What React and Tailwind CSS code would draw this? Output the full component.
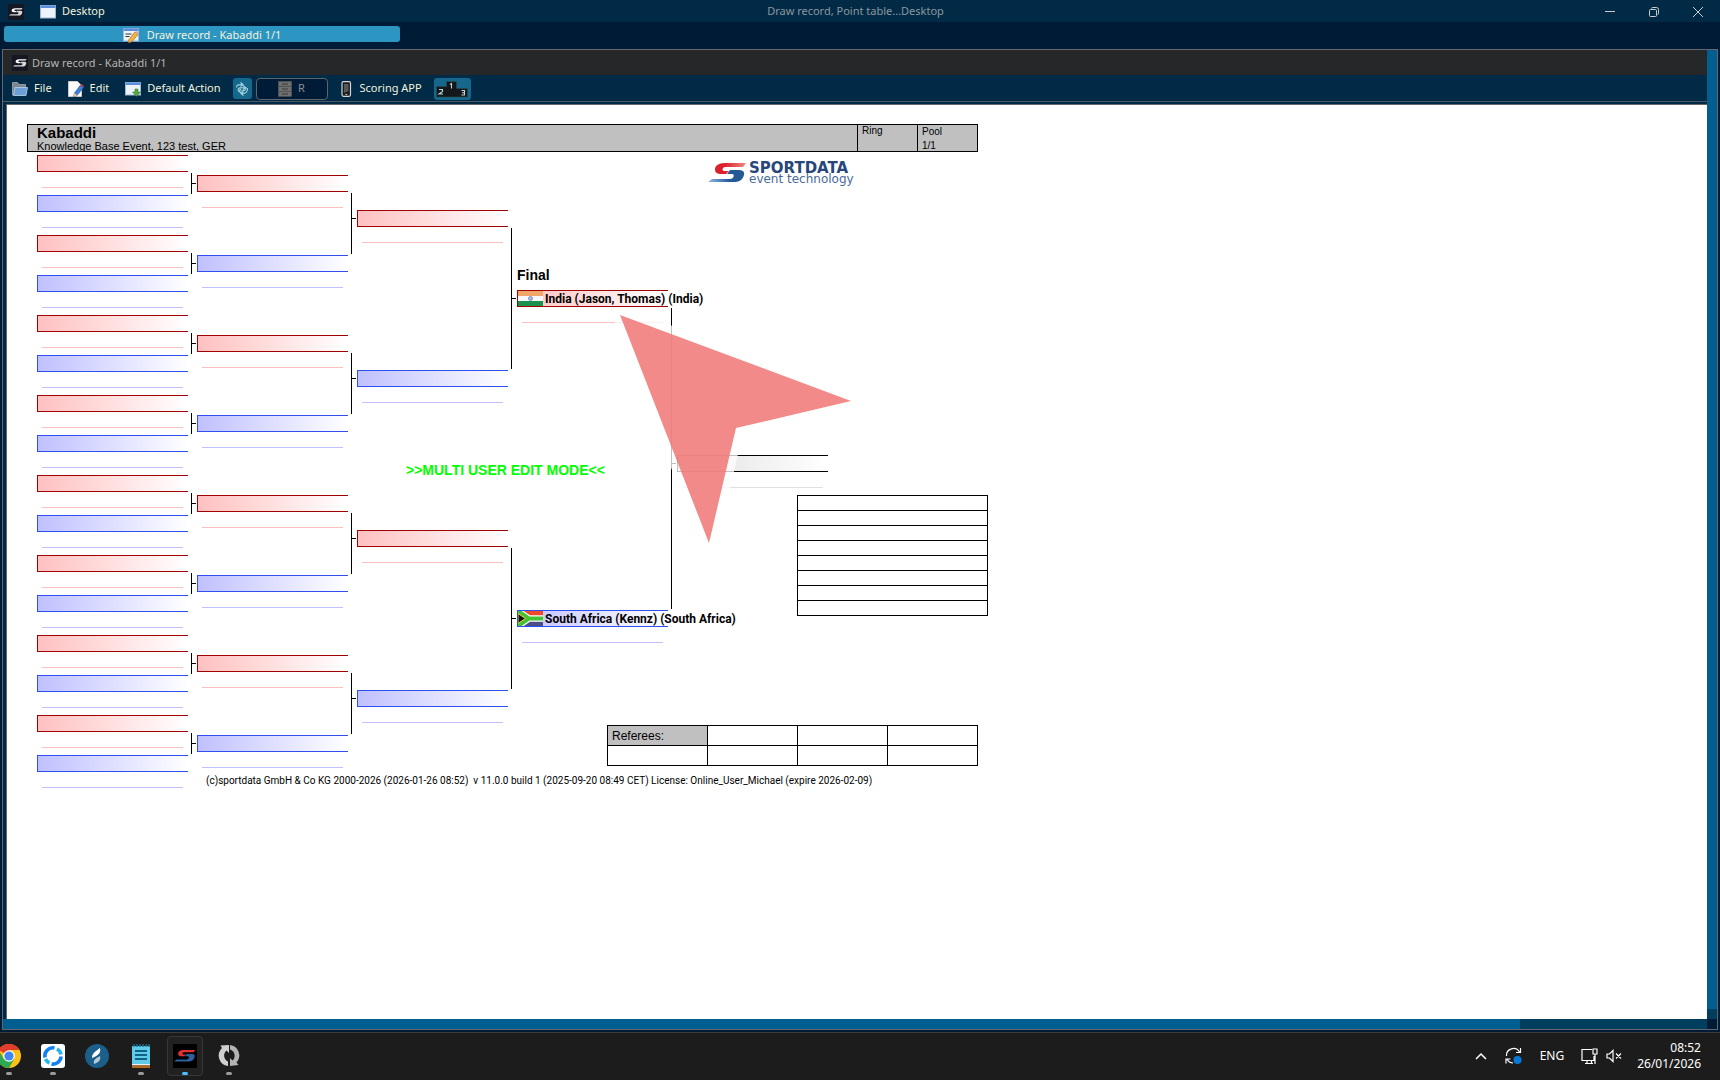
import React from "react";

const UI = "font-['Noto_Sans',sans-serif]";

function SMark({ className, top = "#ffffff", bottom = "#ffffff" }) {
  return (
    <svg viewBox="0 0 38 21" className={className} aria-hidden="true">
      <path d="M37 0H17C10 0 7 3 7 6.500C7 10 10 11 13 11H18L21 8H16C14 8 14 4 17 4H34z" fill={top} />
      <path d="M22 7H31C37 7 37 11 35 14.500C33 19 30 20 26 20H0L4 16.500H22C26 16.500 27 11 24 11H19z" fill={bottom} />
    </svg>
  );
}

function AppMark() {
  return (
    <span className="flex size-4 items-center justify-center bg-[#151722]">
      <SMark className="h-2 w-3.5" top="#ffffff" bottom="#d8d8d8" />
    </span>
  );
}

function WindowIcon({ children }) {
  return (
    <svg viewBox="0 0 16 16" className="size-4" aria-hidden="true">
      <rect x="0.5" y="1.5" width="15" height="12.500" fill="#eef3fa" stroke="#9db8dc" />
      <rect x="0.500" y="1.500" width="15" height="2.500" fill="#5b8fdc" />
      {children}
    </svg>
  );
}

const Pencil = () => (
  <g>
    <path d="M6 12.500 12 5l3 2.500L9 14.600 5.400 16z" fill="#f3b73c" stroke="#a8641c" strokeWidth="0.700" />
    <path d="M12 5l1.200-1.200L16 6l-1 1.500z" fill="#e8a0a0" />
  </g>
);

function FolderIcon() {
  return (
    <svg viewBox="0 0 16 16" className="size-4" aria-hidden="true">
      <path d="M0.500 14V1.500h5l1.500 2h6.500V14z" fill="#7d868e" stroke="#a5abb0" strokeWidth="0.8" />
      <path d="M3 6.500h12.500L14 14.500H1.500z" fill="#6d9fd6" stroke="#b4d0ee" strokeWidth="0.8" />
    </svg>
  );
}

function EditIcon() {
  return (
    <svg viewBox="0 0 16 16" className="size-4" aria-hidden="true">
      <path d="M0.500 0.500h9l4 4v11h-13z" fill="#fafafa" stroke="#c9c9c9" />
      <path d="M6.500 12 12.500 4l3 2.500-6.500 8-3.500 1.500z" fill="#3f7fd8" stroke="#1d4f9c" strokeWidth="0.600" />
      <path d="M12.500 4l1-1.200L16 5l-.5 1.500z" fill="#d8322a" />
      <path d="M6.500 12l2.500 2.500L5.500 16z" fill="#f3c98a" />
    </svg>
  );
}

function PhoneIcon() {
  return (
    <svg viewBox="0 0 16 16" className="size-4" aria-hidden="true">
      <rect x="4" y="0.700" width="8.500" height="14.600" rx="1.500" fill="#1b1b1b" stroke="#d6d6d6" strokeWidth="1.200" />
      <path d="M6 3h4.500v7L6 12z" fill="#55595d" />
      <rect x="7.300" y="13" width="2" height="1" fill="#bbb" />
    </svg>
  );
}

function ServerIcon() {
  return (
    <svg viewBox="0 0 14 16" className="h-4 w-3.5" aria-hidden="true">
      <g fill="#707070" stroke="#5a5a5a" strokeWidth="0.600">
        <rect x="0.500" y="0.500" width="13" height="4.600" />
        <rect x="0.500" y="5.600" width="13" height="4.600" />
        <rect x="0.500" y="10.700" width="13" height="4.600" />
      </g>
      <path d="M4 3h6M4 8h6M4 13h6" stroke="#3b3b3b" />
    </svg>
  );
}

function LinkIcon() {
  return (
    <svg viewBox="0 0 14 14" className="size-3.5" fill="none" stroke="#a9d6e2" strokeWidth="1.100" aria-hidden="true">
      <path d="M1.500 5.500C1.500 2.500 4 2.500 7.500 2.500M5.500 0.500l2.500 2-2.500 2M3 8.500C3 5.500 5 5.500 9.500 5.500M8 3.500l2.500 2-2.500 2" />
      <path d="M12.500 6c0 5-2 5.500-6 5.500M8.500 9.500l-2.500 2 2.500 2M11 5c0 3.500-1 4-5.500 4M6 7l-2.500 2L6 11" />
    </svg>
  );
}

function PodiumIcon() {
  return (
    <svg viewBox="0 0 32 18" className="h-[18px] w-8" aria-hidden="true">
      <path d="M0.500 6.500H10.500V1.500H20.500V8.500H31.500V17H0.500z" fill="#14181a" stroke="#2a4a52" strokeWidth="0.600" />
      <g fill="none" stroke="#b9d3dc" strokeWidth="1.100">
        <path d="M3 9.500h3.500v2L3 14h4" />
        <path d="M14 4.500l1.500-1V8.500" />
        <path d="M25.500 10.500h3v4.500h-3M26 12.700h2.500" />
      </g>
    </svg>
  );
}

const TONES = {
  red: ["border-[#a00000] from-[#ffc0c0]", "bg-[#ffc0c0]"],
  blue: ["border-[#2f4ff0] from-[#c0c0ff]", "bg-[#c0c0ff]"],
  black: ["border-black from-[#e0e0e0]", "bg-[#e0e0e0]"],
};

function Slot({ tone, children }) {
  const [box, line] = TONES[tone];
  return (
    <div>
      <div className={`flex h-[17px] items-center border-y border-l bg-linear-to-r to-white ${box}`}>{children}</div>
      <div className={`mx-[5px] mt-[15px] h-px ${line}`} />
    </div>
  );
}

function Round({ count, pitch, offset }) {
  return (
    <div className={`w-[151px] shrink-0 ${offset}`}>
      {Array.from({ length: count }, (_, i) => (
        <div key={i} className={pitch}>
          <Slot tone={i % 2 ? "blue" : "red"} />
        </div>
      ))}
    </div>
  );
}

function Joins({ count, pitch, offset, height, tick }) {
  return (
    <div className={`w-[9px] shrink-0 ${offset}`}>
      {Array.from({ length: count }, (_, i) => (
        <div key={i} className={pitch}>
          <div className={`ml-[3px] mr-px border-l border-black ${height} ${tick}`}>
            <div className="h-px bg-black" />
          </div>
        </div>
      ))}
    </div>
  );
}

function IndiaFlag() {
  return (
    <svg viewBox="0 0 25 15" className="h-[15px] w-[25px] shrink-0" role="img" aria-label="India">
      <rect width="25" height="5" fill="#f2a66a" />
      <rect y="5" width="25" height="5" fill="#f7f7f7" />
      <rect y="10" width="25" height="5" fill="#1b9150" />
      <circle cx="12.500" cy="7.500" r="2" fill="#a9b8dc" stroke="#6f87c0" strokeWidth="0.800" />
    </svg>
  );
}

function SouthAfricaFlag() {
  return (
    <svg viewBox="0 0 25 15" className="h-[15px] w-[25px] shrink-0" role="img" aria-label="South Africa">
      <rect width="25" height="7.500" fill="#ee4a2c" />
      <rect y="7.500" width="25" height="7.500" fill="#4b4f86" />
      <path d="M0 0 11 7.500 0 15M11 7.500h14" fill="none" stroke="#fff" strokeWidth="6.500" />
      <path d="M0 0 11 7.500 0 15M11 7.500h14" fill="none" stroke="#45c234" strokeWidth="4" />
      <path d="M0 2.500 7.500 7.500 0 12.500z" fill="#111" stroke="#e8d030" strokeWidth="1" />
    </svg>
  );
}

function Competitor({ children }) {
  return <span className="ml-0.5 font-['Roboto',sans-serif] text-[12px] font-bold whitespace-nowrap">{children}</span>;
}

function Bracket() {
  return (
    <div className="col-start-1 row-start-1 ml-[30px] mt-[3px] flex">
      <Round count={16} pitch="h-10" offset="pt-0" />
      <Joins count={8} pitch="h-20" offset="pt-[18px]" height="h-[21px]" tick="pt-2.5" />
      <Round count={8} pitch="h-20" offset="pt-5" />
      <Joins count={4} pitch="h-40" offset="pt-[38px]" height="h-[61px]" tick="pt-[25px]" />
      <Round count={4} pitch="h-40" offset="pt-[55px]" />
      <Joins count={2} pitch="h-80" offset="pt-[73px]" height="h-[141px]" tick="pt-[70px]" />
      <div className="w-[151px] shrink-0">
        <h2 className="flex h-[135px] items-end pb-1.5 text-[14px] leading-[18px] font-bold">Final</h2>
        <div className="h-80">
          <Slot tone="red">
            <IndiaFlag />
            <Competitor>India (Jason, Thomas) (India)</Competitor>
          </Slot>
        </div>
        <Slot tone="blue">
          <SouthAfricaFlag />
          <Competitor>South Africa (Kennz) (South Africa)</Competitor>
        </Slot>
      </div>
      <Joins count={1} pitch="h-80" offset="pt-[153px]" height="h-[301px]" tick="pt-[155px]" />
      <div className="w-[151px] shrink-0 pt-[300px]">
        <Slot tone="black" />
      </div>
    </div>
  );
}

function SportdataLogo() {
  return (
    <svg viewBox="0 0 160 26" className="h-[26px] w-40 overflow-visible" role="img" aria-label="Sportdata event technology">
      <defs>
        <linearGradient id="logoRed"><stop offset="0.300" stopColor="#dc1f2b" /><stop offset="1" stopColor="#f08a80" /></linearGradient>
        <linearGradient id="logoBlue"><stop offset="0" stopColor="#8fb8e4" /><stop offset="0.600" stopColor="#235a96" /></linearGradient>
      </defs>
      <path d="M38 3H17C10 3 7 6 7 9.500C7 13 10 14 13 14H18L21 11H16C14 11 14 7 17 7H35z" fill="url(#logoRed)" />
      <path d="M22 10H31C37 10 37 14 35 17.500C33 21 30 22 26 22H0L4 19H22C26 19 27 14 24 14H19z" fill="url(#logoBlue)" />
      <text x="41" y="13" fontFamily="DejaVu Sans" fontSize="15" fontWeight="700" fill="#27467a">SPORTDATA</text>
      <text x="41" y="23" fontFamily="DejaVu Sans" fontSize="12" fill="#4a6a9c">event technology</text>
    </svg>
  );
}

function Tables() {
  return (
    <div className="col-start-1 row-start-1 flex w-[981px] flex-col pt-2">
      <div className="ml-[701px]"><SportdataLogo /></div>
      <table className="mt-[309px] w-[191px] table-fixed self-end border-collapse" aria-label="Results">
        <tbody>
          {Array.from({ length: 8 }, (_, i) => (
            <tr key={i}><td className="h-[15px] border border-black p-0" /></tr>
          ))}
        </tbody>
      </table>
      <table className="mt-[109px] mr-2.5 w-[371px] table-fixed self-end border-collapse text-[12px] leading-4">
        <colgroup><col className="w-[100px]" /><col /><col /><col /></colgroup>
        <tbody>
          <tr>
            <th scope="row" className="h-5 border border-black bg-[#c0c0c0] p-0 pl-1 text-left font-normal">Referees:</th>
            <td className="border border-black p-0" /><td className="border border-black p-0" /><td className="border border-black p-0" />
          </tr>
          <tr>
            <td className="h-5 border border-black p-0" /><td className="border border-black p-0" />
            <td className="border border-black p-0" /><td className="border border-black p-0" />
          </tr>
        </tbody>
      </table>
      <p className="mt-[7px] ml-[199px] font-['Roboto',sans-serif] text-[10px] leading-4 whitespace-pre">
        {"(c)sportdata GmbH & Co KG 2000-2026 (2026-01-26 08:52)  v 11.0.0 build 1 (2025-09-20 08:49 CET) License: Online_User_Michael (expire 2026-02-09)"}
      </p>
    </div>
  );
}

function Sheet() {
  return (
    <main className="relative min-h-0 flex-1 overflow-hidden bg-white pt-[19px] font-['Liberation_Sans',sans-serif] text-black">
      <header className="ml-5 flex h-7 w-[951px] border border-black bg-[#c0c0c0]">
        <div className="flex-1 pl-[9px]">
          <h1 className="text-[15px] leading-4 font-bold">Kabaddi</h1>
          <p className="text-[11px] leading-2.5">Knowledge Base Event, 123 test, GER</p>
        </div>
        <div className="w-[60px] border-l border-black pl-1 text-[10px] leading-3">Ring</div>
        <div className="w-[60px] border-l border-black pl-1 text-[10px] leading-3.5">Pool<br />1/1</div>
      </header>
      <div className="grid">
        <Bracket />
        <Tables />
        <p className="col-start-1 row-start-1 mt-[308px] ml-[399px] h-5 text-[14px] leading-5 font-bold whitespace-nowrap text-[#00ff00]">
          &gt;&gt;MULTI USER EDIT MODE&lt;&lt;
        </p>
      </div>
      <svg viewBox="0 0 260 250" className="absolute top-[200px] left-[603px] h-[250px] w-[260px]" aria-hidden="true">
        <path d="M10 10 241 96 126 123 99 238z" fill="#fff" stroke="#fff" strokeWidth="16" strokeLinejoin="round" opacity="0.750" />
        <path d="M10 10 241 96 126 123 99 238z" fill="#ef7573" opacity="0.850" />
      </svg>
    </main>
  );
}

function TaskItem({ label, dot = "bg-[#9a9a9a] w-1.5", active, children }) {
  return (
    <button aria-label={label} className={`flex h-10 w-9 shrink-0 flex-col items-center justify-end rounded border ${active ? "border-[#383838] bg-[#212121]" : "border-transparent"}`}>
      <span className="flex size-6 items-center justify-center">{children}</span>
      <span className={`mt-1 h-[3px] rounded-full ${dot}`} />
    </button>
  );
}

function Taskbar() {
  return (
    <footer className="flex h-12 shrink-0 items-start border-t border-[#3c3c3c] bg-[#1c1c1c] pt-[3px] pr-[19px] text-white">
      <nav className="-ml-[9px] flex gap-2" aria-label="Taskbar">
        <TaskItem label="Chrome">
          <svg viewBox="0 0 24 24" className="size-6">
            <circle cx="12" cy="12" r="12" fill="#fbc116" />
            <path d="M12 12 1.600 6A12 12 0 0 1 22.400 6H12z" fill="#e33b2e" />
            <path d="M1.600 6A12 12 0 0 0 12 24l5.200-9L12 12 6.800 15z" fill="#2da94f" />
            <circle cx="12" cy="12" r="5.800" fill="#fff" /><circle cx="12" cy="12" r="4.600" fill="#4285f4" />
          </svg>
        </TaskItem>
        <TaskItem label="Remote support">
          <svg viewBox="0 0 24 24" className="size-6">
            <rect width="24" height="24" rx="3" fill="#fff" />
            <g fill="none" strokeWidth="3.600">
              <path d="M4 13.500A8 8 0 0 1 13.500 4" stroke="#1580f2" />
              <path d="M16 5a8 8 0 0 1 4 5.500" stroke="#22b6f0" />
              <path d="M20 12.500A8 8 0 0 1 10.500 20" stroke="#1580f2" />
              <path d="M8.500 19a8 8 0 0 1-4-4" stroke="#22b6f0" />
            </g>
          </svg>
        </TaskItem>
        <TaskItem label="Feather" dot="w-1.5">
          <svg viewBox="0 0 24 24" className="size-6">
            <circle cx="12" cy="12" r="12" fill="#1c5f8a" />
            <path d="M7 14c0-5 4-7 8-10 1 5-1 7-8 10z" fill="#fff" />
            <path d="M9 20c-1-5 3-6 6-8 1 4-1 6-6 8z" fill="#b8ccd8" />
          </svg>
        </TaskItem>
        <TaskItem label="Notepad">
          <svg viewBox="0 0 24 24" className="size-6">
            <rect x="3" y="2" width="18" height="19" fill="#5fcbe6" />
            <rect x="3" y="20" width="18" height="1.500" fill="#eee" /><rect x="3" y="21.500" width="18" height="2.500" fill="#b5651d" />
            <path d="M5 0v3M8 0v3M11 0v3M14 0v3M17 0v3M20 0v3" stroke="#1d6f94" strokeWidth="1.400" />
            <path d="M6 7h12M6 11h12M6 15h12" stroke="#11618a" strokeWidth="1.800" />
          </svg>
        </TaskItem>
        <TaskItem label="Sportdata" active dot="bg-[#4cc2ff] w-1.5">
          <span className="flex size-6 items-center justify-center bg-black">
            <SMark className="h-3 w-[22px]" top="#e03030" bottom="#2e5f9e" />
          </span>
        </TaskItem>
        <TaskItem label="Sync">
          <svg viewBox="0 0 24 24" className="size-6">
            <path d="M11 22A10.500 10.500 0 0 1 5 4L3.500 1.500 12 1v8L9.500 6.500A6.500 6.500 0 0 0 11 17.500z" fill="#cfcfcf" />
            <path d="M13 1a10.500 10.500 0 0 1 6.500 17.500l2 2.500-8.500 1v-8l2.500 2.500A6.500 6.500 0 0 0 13 5.500z" fill="#b4b4b4" />
          </svg>
        </TaskItem>
      </nav>
      <div className={`ml-auto flex h-10 items-center text-[12px] ${UI}`}>
        <button aria-label="Show hidden icons">
          <svg viewBox="0 0 12 8" className="h-2 w-3" fill="none" stroke="#fff" strokeWidth="1.500"><path d="M1 7l5-5 5 5" /></svg>
        </button>
        <button aria-label="Updates" className="ml-[18px]">
          <svg viewBox="0 0 18 18" className="size-[18px]" fill="none" stroke="#fff" strokeWidth="1.200">
            <path d="M1.500 9a7 7 0 0 1 13-4M15.500 1v4.500H11M8 16a7 7 0 0 1-6-4M1 16.500V12h4.500" />
            <circle cx="12.500" cy="13" r="4" fill="#0a78d7" stroke="none" />
          </svg>
        </button>
        <button className="ml-[17px]">ENG</button>
        <button aria-label="Network and sound" className="ml-[17px] flex items-center gap-2">
          <svg viewBox="0 0 17 17" className="size-[17px]" fill="none" stroke="#fff" strokeWidth="1.200">
            <path d="M11 1.500H1v11h12V8M4 15.500h8M6 12.500v3M10.500 12.500v3M12 1h4v5h-4zM14 6v10" />
          </svg>
          <svg viewBox="0 0 17 14" className="h-3.5 w-[17px]" fill="none" stroke="#fff" strokeWidth="1.200">
            <path d="M1 5h2.500L7 1.500v11L3.500 9H1zM10 4.500l5 5M15 4.500l-5 5" />
          </svg>
        </button>
        <div className="ml-3.5 text-right leading-4">08:52<br />26/01/2026</div>
      </div>
    </footer>
  );
}

export default function App() {
  return (
    <div className={`flex h-screen flex-col overflow-hidden bg-[#001b35] text-[11px] text-[#f2f2dc] ${UI}`}>
      <header className="grid h-[22px] shrink-0 grid-cols-[1fr_auto_1fr] items-center bg-[#002a46] pt-px pr-[17px] pl-2">
        <div className="flex items-center">
          <AppMark />
          <span className="ml-4"><WindowIcon /></span>
          <span className="ml-1.5">Desktop</span>
        </div>
        <div className="text-[#8c979d]">Draw record, Point table...Desktop</div>
        <div className="flex justify-end gap-[34px] text-[#c8ccce]">
          <button aria-label="Minimise"><svg viewBox="0 0 10 10" className="size-2.5" stroke="currentColor"><path d="M0 4.500h10" /></svg></button>
          <button aria-label="Restore"><svg viewBox="0 0 10 10" className="size-2.5" fill="none" stroke="currentColor"><rect x="0.500" y="2.500" width="7" height="7" rx="1" /><path d="M2.500 1.500q0-1 1-1h4q2 0 2 2v4q0 1-1 1" /></svg></button>
          <button aria-label="Close"><svg viewBox="0 0 10 10" className="size-2.5" stroke="currentColor"><path d="M0 0l10 10M10 0L0 10" /></svg></button>
        </div>
      </header>
      <div className="flex h-[27px] shrink-0 items-start px-1 pt-1">
        <button className="flex h-4 w-[396px] items-center justify-center rounded-[3px] bg-[#2c95c1] pt-0.5">
          <WindowIcon><path d="M2.500 7h6M2.500 9.500h4" stroke="#333" /><Pencil /></WindowIcon>
          <span className="ml-2 leading-4">Draw record - Kabaddi 1/1</span>
        </button>
      </div>
      <section className="mr-0.5 mb-0.5 ml-0.5 flex min-h-0 flex-1 border border-[#64686c]">
        <div className="flex min-w-0 flex-1 flex-col">
          <div className="flex h-[25px] shrink-0 items-center bg-[#262729] pt-px pl-[9px] text-[#b4b4b4]">
            <AppMark /><span className="ml-1">Draw record - Kabaddi 1/1</span>
          </div>
          <div className="flex h-[27px] shrink-0 items-center border-b border-[#4d5a64] bg-[#002a46] pt-px pl-[9px]">
            <button className="flex items-center gap-1.5"><FolderIcon />File</button>
            <button className="ml-4 flex items-center gap-1.5"><EditIcon />Edit</button>
            <button className="ml-4 flex items-center gap-1.5">
              <WindowIcon><path d="M10 8h3v3h2.500L11.500 15.500 7.500 11H10z" fill="#58a846" stroke="#2e6e22" strokeWidth="0.500" /></WindowIcon>
              Default Action
            </button>
            <button aria-label="Link" className="ml-3 flex h-[21px] w-[19px] items-center justify-center rounded-[3px] bg-[#15678c]"><LinkIcon /></button>
            <button className="ml-1 flex h-[22px] w-[72px] items-center justify-center gap-1.5 rounded border border-[#5c6670] bg-[#001b35] text-[#8a8f94]" disabled><ServerIcon />R</button>
            <button className="ml-2.5 flex items-center gap-1.5"><PhoneIcon />Scoring APP</button>
            <button aria-label="Podium" className="ml-3 flex h-[22px] w-[37px] items-center justify-center rounded-[3px] bg-[#15678c]"><PodiumIcon /></button>
          </div>
          <div className="flex min-h-0 flex-1 flex-col bg-[#002a46] pt-0.5 pl-[3px]">
            <div className="flex min-h-0 flex-1 flex-col border-t border-l border-[#64686c]"><Sheet /></div>
          </div>
          <div className="flex h-2.5 shrink-0 bg-[#003e5e]"><div className="w-[89%] bg-[#005f90]" /></div>
        </div>
        <div className="flex w-2.5 shrink-0 flex-col bg-[#003e5e]">
          <div className="flex-1 bg-[#005f90]" />
          <div className="h-2.5" />
          <div className="h-2.5 bg-[#001b35]" />
        </div>
      </section>
      <Taskbar />
    </div>
  );
}
